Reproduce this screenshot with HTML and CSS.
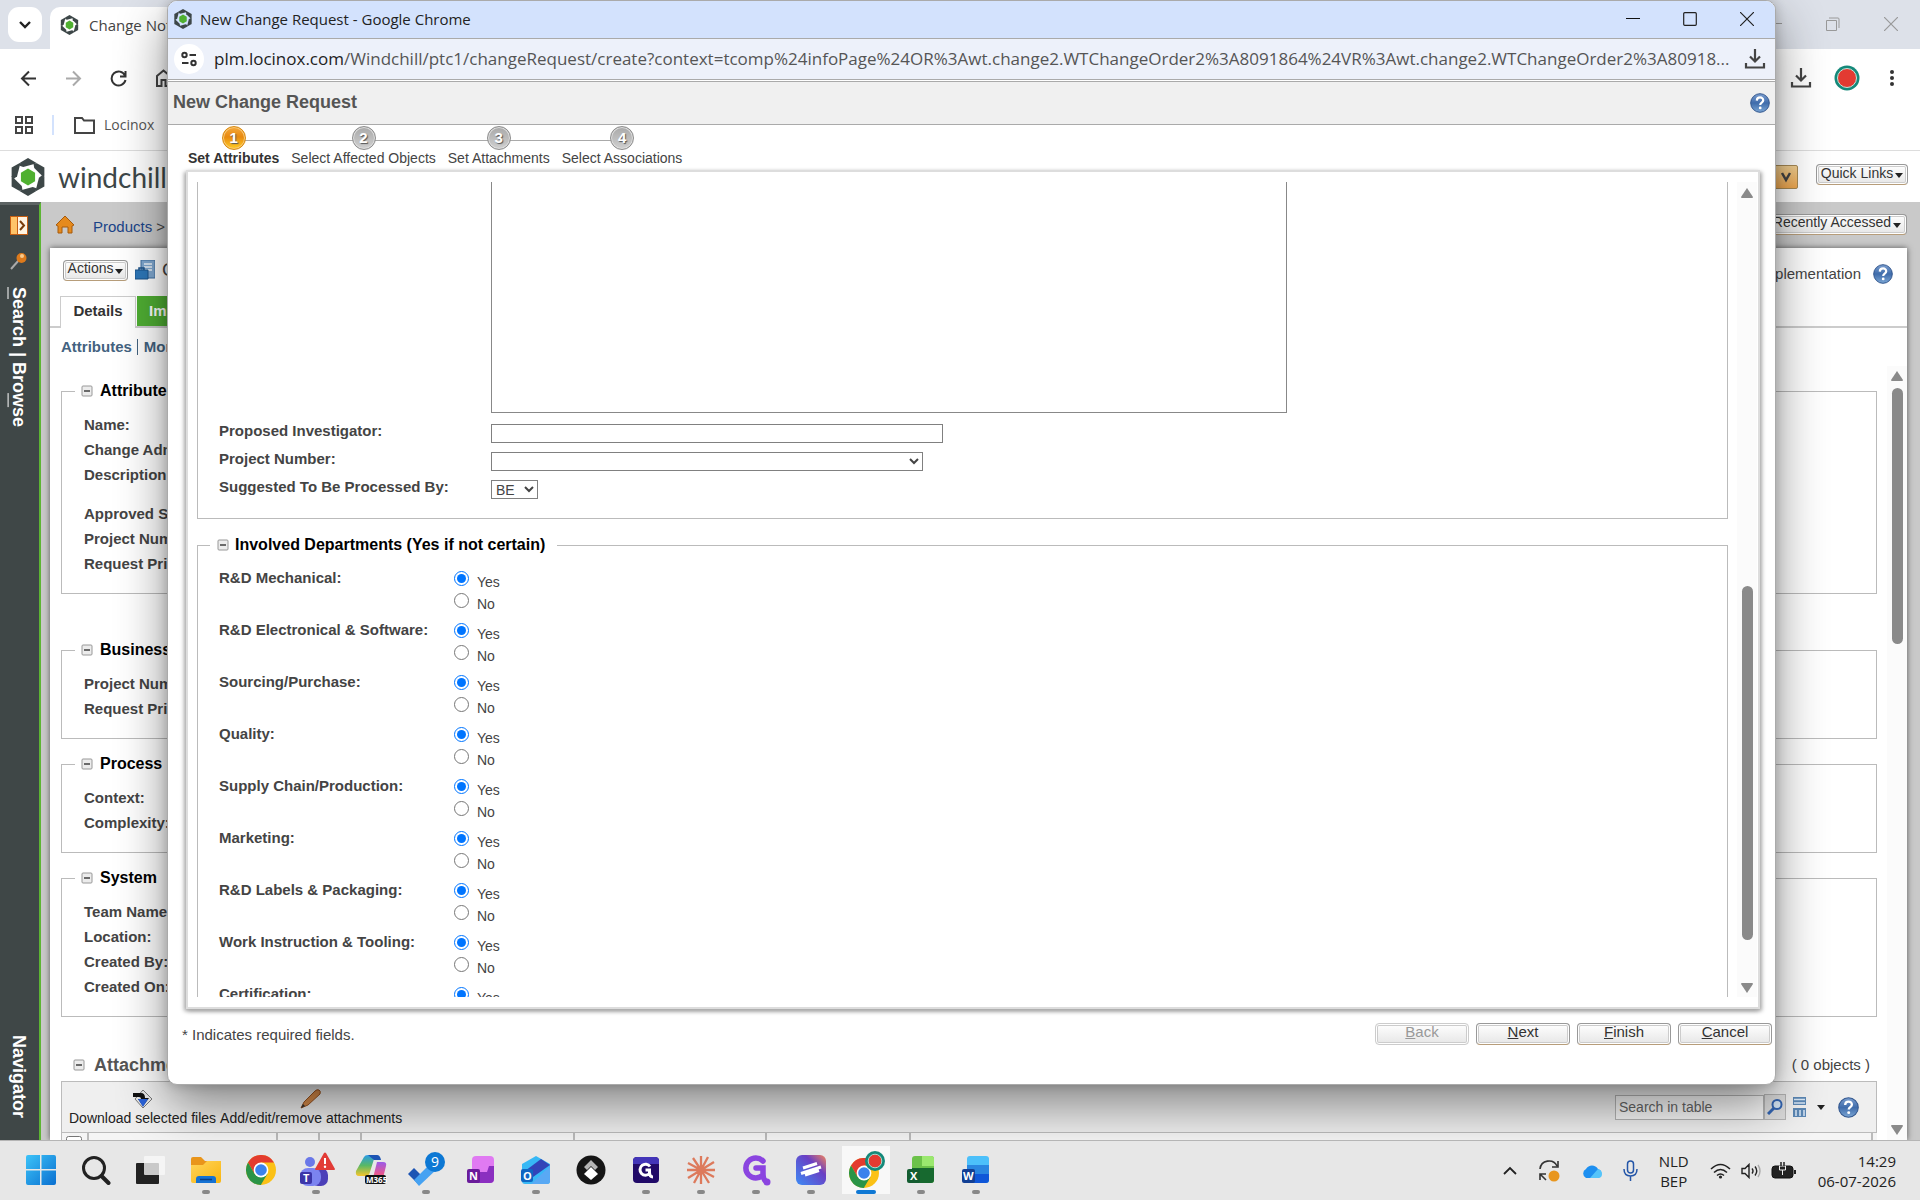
FILE: index.html
```html
<!DOCTYPE html>
<html lang="en">
<head>
<meta charset="utf-8">
<title>New Change Request</title>
<link rel="stylesheet" href="styles.css">
</head>
<body>
<svg class="defs" aria-hidden="true">
  <defs>
    <linearGradient id="gHelp" x1="0" y1="0" x2="0" y2="1"><stop offset="0" stop-color="#7c9fd0"/><stop offset=".5" stop-color="#3f6cab"/><stop offset="1" stop-color="#7ba6d4"/></linearGradient>
    <linearGradient id="gWin" x1="0" y1="0" x2="1" y2="1"><stop offset="0" stop-color="#3cc3f8"/><stop offset="1" stop-color="#0a6fd0"/></linearGradient>
    <linearGradient id="gFolder" x1="0" y1="0" x2="1" y2="1"><stop offset="0" stop-color="#ffd45c"/><stop offset="1" stop-color="#f9b50e"/></linearGradient>
    <linearGradient id="gM" x1="0" y1="0" x2="0" y2="1"><stop offset="0" stop-color="#2a9be8"/><stop offset=".5" stop-color="#59b865"/><stop offset="1" stop-color="#f7c52b"/></linearGradient>
    <linearGradient id="gM2" x1="0" y1="0" x2="0" y2="1"><stop offset="0" stop-color="#9b5be8"/><stop offset=".6" stop-color="#e8588f"/><stop offset="1" stop-color="#f5784e"/></linearGradient>
    <linearGradient id="gSt" x1="1" y1="0" x2="0" y2="1"><stop offset="0" stop-color="#f2845c"/><stop offset=".35" stop-color="#6a3fc4"/><stop offset="1" stop-color="#3d8bf5"/></linearGradient>
    <symbol id="minus" viewBox="0 0 12 12"><rect x="1" y="1" width="10" height="10" rx="1" fill="#ececec" stroke="#989898"/><path d="M3 6h6" stroke="#333" stroke-width="1.4"/></symbol>
    <symbol id="help" viewBox="0 0 20 20"><circle cx="10" cy="10" r="9.3" fill="url(#gHelp)" stroke="#34588f"/><path d="M6.8 7.6c.2-4.300 6.600-4 6.400-.2-.1 2.300-3 2.300-3 4.600" fill="none" stroke="#fff" stroke-width="2.200"/><circle cx="10.200" cy="14.900" r="1.400" fill="#fff"/></symbol>
    <path id="blade" d="M-8-15.400L0-20 9.500-14.500-5-10.500-9-12z" fill="#3d4748"/>
    <symbol id="ptc" viewBox="-18 -20 36 40"><use href="#blade"/><use href="#blade" transform="rotate(60)"/><use href="#blade" transform="rotate(120)"/><use href="#blade" transform="rotate(180)"/><use href="#blade" transform="rotate(240)"/><use href="#blade" transform="rotate(300)"/><path d="M0-9l7.500 4.500v9L0 9l-7.500-4.500v-9z" fill="#4fb030"/></symbol>
    <symbol id="chrome" viewBox="0 0 30 30"><circle cx="15" cy="15" r="15" fill="#fbc116"/><path d="M2 7.500A15 15 0 0 1 28 7.500H15L8.500 18.700z" fill="#e33b2e"/><path d="M2 7.500A15 15 0 0 0 14.800 30L21.500 18.700 8.500 18.700z" fill="#2a9447"/><circle cx="15" cy="15" r="7.400" fill="#fff"/><circle cx="15" cy="15" r="5.800" fill="#3b82ec"/></symbol>
    <symbol id="dl" viewBox="0 0 22 22"><path d="M11 1v12M6 8.500l5 5 5-5M2 15v4.500h18V15" fill="none" stroke="#444" stroke-width="2.200"/></symbol>
    <symbol id="up" viewBox="0 0 14 12"><path d="M7 1l6 9q0 1-1 1H2q-1 0-1-1z" fill="#8a8a8a"/></symbol>
    <symbol id="down" viewBox="0 0 14 12"><path d="M7 11l6-9q0-1-1-1H2q-1 0-1 1z" fill="#8a8a8a"/></symbol>
    <symbol id="caret" viewBox="0 0 8 5"><path d="M0 0h8L4 5z" fill="#222"/></symbol>
  </defs>
</svg>

<main class="browser">
  <div class="tabstrip">
    <button class="tab-search" aria-label="Search tabs"><svg width="14" height="10" viewBox="0 0 14 10"><path d="M2 2l5 5 5-5" fill="none" stroke="#222" stroke-width="2.400"/></svg></button>
    <div class="tab"><svg width="19" height="20"><use href="#ptc"/></svg><span>Change Notice</span></div>
    <div class="win-controls">
      <svg width="14" height="14" viewBox="0 0 14 14"><path d="M0 6.500h14" stroke="#999"/></svg>
      <svg width="14" height="14" viewBox="0 0 14 14"><path d="M.5 3.500h10v10H.5zM3 1h9q1 0 1 1v9" fill="none" stroke="#999"/></svg>
      <svg width="14" height="14" viewBox="0 0 14 14"><path d="M0 0l14 14M14 0L0 14" stroke="#999" stroke-width="1.200"/></svg>
    </div>
  </div>
  <div class="chrome-top">
    <div class="toolbar">
      <svg width="17" height="17" viewBox="0 0 17 17"><path d="M16 8.500H2M9 1.500l-7 7 7 7" fill="none" stroke="#333" stroke-width="2"/></svg>
      <svg width="17" height="17" viewBox="0 0 17 17"><path d="M1 8.500h14M8 1.500l7 7-7 7" fill="none" stroke="#aaa" stroke-width="2"/></svg>
      <svg width="17" height="17" viewBox="0 0 17 17"><path d="M15 5.500A7 7 0 1 0 15.500 10M15.500 1v5.500H10" fill="none" stroke="#333" stroke-width="2"/></svg>
      <svg width="17" height="18" viewBox="0 0 17 18"><path d="M2 17V7l6.500-5.500L15 7v10h-4.500v-6h-4v6z" fill="none" stroke="#444" stroke-width="2"/></svg>
      <div class="toolbar-right">
        <svg width="22" height="22"><use href="#dl"/></svg>
        <svg class="rec" width="26" height="26" viewBox="0 0 26 26"><circle cx="13" cy="13" r="12.500" fill="#14897a"/><circle cx="13" cy="13" r="9.500" fill="#e33a32" stroke="#bfe6dc"/></svg>
        <svg width="6" height="18" viewBox="0 0 6 18"><circle cx="3" cy="3" r="2" fill="#333"/><circle cx="3" cy="9" r="2" fill="#333"/><circle cx="3" cy="15" r="2" fill="#333"/></svg>
      </div>
    </div>
    <div class="bookmarks">
      <svg width="18" height="18" viewBox="0 0 18 18"><path d="M1 1h6v6H1zM11 1h6v6h-6zM1 11h6v6H1zM11 11h6v6h-6z" fill="none" stroke="#444" stroke-width="2"/></svg>
      <i></i>
      <svg width="21" height="18" viewBox="0 0 21 18"><path d="M1 16V2h7l2 2.500h10V17H1z" fill="none" stroke="#444" stroke-width="2"/></svg>
      <a href="#">Locinox</a>
    </div>
  </div>
  <header class="brand">
    <svg width="34" height="38"><use href="#ptc"/></svg>
    <span>windchill</span>
    <button class="gold" aria-label="Search options"><svg width="12" height="12" viewBox="0 0 12 12"><path d="M2 2l4 7 4-7" fill="none" stroke="#444" stroke-width="2.500"/></svg></button>
    <button class="btn quick">Quick Links<svg width="8" height="5"><use href="#caret"/></svg></button>
  </header>
  <div class="app">
    <nav class="navigator">
      <svg width="18" height="19" viewBox="0 0 18 19"><path d="M0 0h18v19H0z" fill="#c65e12"/><path d="M1 1h6v17H1z" fill="#ffc469"/><path d="M8 1h9v17H8z" fill="#fff4e2"/><path d="M10 5l4 4.500-4 4.500" fill="none" stroke="#7a3c0a" stroke-width="2"/></svg>
      <svg width="18" height="18" viewBox="0 0 18 18"><path d="M1 17l8-9" stroke="#aaa" stroke-width="2"/><circle cx="11.500" cy="6" r="5" fill="#dd7a1c"/><circle cx="12" cy="4" r="2" fill="#f9c98c"/></svg>
      <span><u>S</u>earch | Bro<u>w</u>se</span>
      <span class="nav-end">Navigator</span>
    </nav>
    <div class="workspace">
      <div class="crumbs">
        <svg width="18" height="18" viewBox="0 0 18 18"><path d="M0 9l9-9 9 9-2 1v7h-4v-6H6v6H2v-7z" fill="#e58a1d" stroke="#a65a0c"/></svg>
        <span><a href="#">Products</a> &gt;</span>
        <button class="btn recent">Recently Accessed<svg width="8" height="5"><use href="#caret"/></svg></button>
      </div>
      <section class="page">
        <div class="page-head">
          <div class="page-actions">
            <button class="btn">Actions<svg width="8" height="5"><use href="#caret"/></svg></button>
            <svg width="20" height="20" viewBox="0 0 20 20"><path d="M6 0h14v18H6z" fill="#7fa7cf" stroke="#3f6f9f"/><path d="M9 4h8M9 7h8M9 10h8" stroke="#eef5fb" stroke-width="1.500"/><path d="M0 10h13v9H0z" fill="#2d77b8" stroke="#1b5288"/><path d="M4 10V8h5v2" fill="none" stroke="#1b5288" stroke-width="1.500"/></svg>
            <span class="page-title">C</span>
          </div>
          <span class="state">Implementation</span>
          <svg width="20" height="20"><use href="#help"/></svg>
        </div>
        <div class="tabs"><button class="on">Details</button><button>Implementation</button></div>
        <div class="sublinks"><a href="#">Attributes</a><a href="#">More</a></div>
        <div class="scroll">
          <div class="scroll-body">
            <fieldset class="group"><legend><svg width="12" height="12"><use href="#minus"/></svg>Attributes</legend>
              <p>Name:</p><p>Change Admin</p><p>Description:</p><p class="gap">Approved S</p><p>Project Number</p><p>Request Priority</p></fieldset>
            <fieldset class="group wide"><legend><svg width="12" height="12"><use href="#minus"/></svg>Business</legend>
              <p>Project Number</p><p>Request Priority</p></fieldset>
            <fieldset class="group"><legend><svg width="12" height="12"><use href="#minus"/></svg>Process</legend>
              <p>Context:</p><p>Complexity:</p></fieldset>
            <fieldset class="group"><legend><svg width="12" height="12"><use href="#minus"/></svg>System</legend>
              <p>Team Name</p><p>Location:</p><p>Created By:</p><p>Created On:</p></fieldset>
            <div class="attach-head"><svg width="12" height="12"><use href="#minus"/></svg><h2>Attachments</h2><span>( 0 objects )</span></div>
            <div class="attach-bar">
              <button class="tool"><svg width="22" height="20" viewBox="0 0 22 20"><path d="M11 1l9 9-9 9-8-9z" fill="#e8e8e8" stroke="#777"/><path d="M1 4h8q4 0 4 5h4l-6 8-5-7h3q0-2-2-2H1z" fill="#111"/><path d="M6 10h10l-5 8z" fill="#2a62d8"/></svg>Download selected files</button>
              <button class="tool"><svg width="22" height="20" viewBox="0 0 22 20"><path d="M1 19l3-6L15 2q2-2 4-1t1 4L8 16z" fill="#d98c4a" stroke="#9c5420"/><path d="M1 19l2-4 2 2z" fill="#333"/></svg>Add/edit/remove attachments</button>
              <div class="find">
                <input type="text" placeholder="Search in table" aria-label="Search in table"><button aria-label="Search"><svg width="16" height="16" viewBox="0 0 16 16"><path d="M1 15l6-6" stroke="#3466b4" stroke-width="3"/><circle cx="10" cy="5.500" r="4.500" fill="#d8e8f8" stroke="#3466b4" stroke-width="2"/></svg></button>
                <svg width="13" height="20" viewBox="0 0 13 20"><path d="M0 0h13v8H0zM0 11h13v9H0z" fill="#5b87b4"/><path d="M1 2.500h11M1 6h11M3 13v6M7 13v6M11 13v6" stroke="#dbe9f6" stroke-width="1.500"/></svg>
                <svg class="mini" width="8" height="5"><use href="#caret"/></svg>
                <svg width="21" height="21"><use href="#help"/></svg>
              </div>
            </div>
            <div class="attach-cols"><i class="w27"><input type="checkbox" aria-label="Select all"></i><i class="w188"></i><i class="w42"></i><i class="w42"></i><i class="w212"></i><i class="w192"></i><i class="w144"></i><i class="rest"></i></div>
          </div>
          <div class="bar outer"><svg width="14" height="12"><use href="#up"/></svg><b></b><svg width="14" height="12"><use href="#down"/></svg></div>
        </div>
      </section>
    </div>
  </div>
</main>

<section class="dialog" aria-label="New Change Request">
  <div class="d-title"><svg width="18" height="20"><use href="#ptc"/></svg><span>New Change Request - Google Chrome</span>
    <div class="d-controls">
      <svg width="14" height="14" viewBox="0 0 14 14"><path d="M0 6.500h14" stroke="#111"/></svg>
      <svg width="14" height="14" viewBox="0 0 14 14"><rect x=".7" y=".7" width="12.600" height="12.600" rx="1" fill="none" stroke="#222" stroke-width="1.200"/></svg>
      <svg width="14" height="14" viewBox="0 0 14 14"><path d="M0 0l14 14M14 0L0 14" stroke="#222" stroke-width="1.200"/></svg>
    </div></div>
  <div class="d-url"><span class="site"><svg width="16" height="16" viewBox="0 0 16 16"><g fill="none" stroke="#333" stroke-width="2"><circle cx="3.500" cy="4" r="2.200"/><path d="M8.500 4H15M1 12h6.500"/><circle cx="12.500" cy="12" r="2.200"/></g></svg></span>
    <p>plm.locinox.com<span>/Windchill/ptc1/changeRequest/create?context=tcomp%24infoPage%24OR%3Awt.change2.WTChangeOrder2%3A8091864%24VR%3Awt.change2.WTChangeOrder2%3A80918...</span></p>
    <svg width="22" height="22"><use href="#dl"/></svg></div>
  <div class="d-head"><h1>New Change Request</h1><svg width="20" height="20"><use href="#help"/></svg></div>
  <ol class="steps">
    <li class="now"><i>1</i>Set Attributes</li><li><i>2</i>Select Affected Objects</li><li><i>3</i>Set Attachments</li><li><i>4</i>Select Associations</li>
  </ol>
  <form class="d-panel">
    <div class="d-body">
      <div class="box first">
        <textarea aria-label="Description"></textarea>
        <label for="inv">Proposed Investigator:</label><input id="inv" type="text">
        <label for="prj">Project Number:</label><select id="prj"><option></option></select>
        <label for="by">Suggested To Be Processed By:</label><select id="by"><option>BE</option></select>
      </div>
      <fieldset class="box second">
        <legend><svg width="12" height="12"><use href="#minus"/></svg>Involved Departments (Yes if not certain)</legend>
        <div class="dept"><span>R&amp;D Mechanical:</span><div><label><input type="radio" name="d1" checked><em>Yes</em></label><label><input type="radio" name="d1"><em>No</em></label></div></div>
        <div class="dept"><span>R&amp;D Electronical &amp; Software:</span><div><label><input type="radio" name="d2" checked><em>Yes</em></label><label><input type="radio" name="d2"><em>No</em></label></div></div>
        <div class="dept"><span>Sourcing/Purchase:</span><div><label><input type="radio" name="d3" checked><em>Yes</em></label><label><input type="radio" name="d3"><em>No</em></label></div></div>
        <div class="dept"><span>Quality:</span><div><label><input type="radio" name="d4" checked><em>Yes</em></label><label><input type="radio" name="d4"><em>No</em></label></div></div>
        <div class="dept"><span>Supply Chain/Production:</span><div><label><input type="radio" name="d5" checked><em>Yes</em></label><label><input type="radio" name="d5"><em>No</em></label></div></div>
        <div class="dept"><span>Marketing:</span><div><label><input type="radio" name="d6" checked><em>Yes</em></label><label><input type="radio" name="d6"><em>No</em></label></div></div>
        <div class="dept"><span>R&amp;D Labels &amp; Packaging:</span><div><label><input type="radio" name="d7" checked><em>Yes</em></label><label><input type="radio" name="d7"><em>No</em></label></div></div>
        <div class="dept"><span>Work Instruction &amp; Tooling:</span><div><label><input type="radio" name="d8" checked><em>Yes</em></label><label><input type="radio" name="d8"><em>No</em></label></div></div>
        <div class="dept"><span>Certification:</span><div><label><input type="radio" name="d9" checked><em>Yes</em></label></div></div>
      </fieldset>
    </div>
    <div class="bar inner"><svg width="14" height="12"><use href="#up"/></svg><b></b><svg width="14" height="12"><use href="#down"/></svg></div>
  </form>
  <footer class="d-foot"><p>* Indicates required fields.</p>
    <button class="btn big" disabled><u>B</u>ack</button><button class="btn big"><u>N</u>ext</button><button class="btn big"><u>F</u>inish</button><button class="btn big"><u>C</u>ancel</button></footer>
</section>

<footer class="taskbar">
  <div class="apps">
    <div class="t"><svg width="30" height="30" viewBox="0 0 30 30"><path d="M0 2q0-2 2-2h12v14H0zM15.500 0H28q2 0 2 2v12H15.500zM0 15.500h14V30H2q-2 0-2-2zM15.500 15.500H30V28q0 2-2 2H15.500z" fill="url(#gWin)"/></svg></div>
    <div class="t"><svg width="30" height="30" viewBox="0 0 30 30"><circle cx="13" cy="13" r="10.500" fill="none" stroke="#222" stroke-width="3"/><path d="M20.500 21l7 7" stroke="#222" stroke-width="4" stroke-linecap="round"/></svg></div>
    <div class="t"><svg width="30" height="30" viewBox="0 0 30 30"><rect x="0" y="8" width="23" height="21" rx="1" fill="#222"/><rect x="8" y="1" width="21" height="19" rx="1" fill="#f8f8f8" fill-opacity=".78"/></svg></div>
    <div class="t run"><svg width="30" height="30" viewBox="0 0 30 30"><path d="M0 4q0-2 2-2h8l4 4h16v10H0z" fill="#e9951b"/><path d="M0 10h12l4-4h14v20q0 2-2 2H2q-2 0-2-2z" fill="url(#gFolder)"/><path d="M5 28v-4q0-3 3-3h14q3 0 3 3v4z" fill="#1572d3"/><path d="M9 24.500h12" stroke="#0c3f85" stroke-width="1.500"/></svg></div>
    <div class="t"><svg width="30" height="30"><use href="#chrome"/></svg></div>
    <div class="t run"><svg width="38" height="36" viewBox="0 0 38 36"><circle cx="13" cy="10" r="5" fill="#6a78e8"/><rect x="14" y="16" width="17" height="18" rx="7" fill="#4b3fb8"/><rect x="3" y="16" width="21" height="18" rx="8" fill="#7b83f0"/><rect x="3" y="20" width="12" height="12" rx="2" fill="#3b35a8"/><text x="6" y="30" class="g10">T</text><path d="M27 1q1-1 2 0l9 16q0 1-1 1H19q-1 0-1-1z" fill="#e23b36"/><path d="M28 6v6" stroke="#fff" stroke-width="2"/><circle cx="28" cy="14.800" r="1.200" fill="#fff"/></svg></div>
    <div class="t"><svg width="32" height="32" viewBox="0 0 32 32"><path d="M9 3q1-2 4-2h9q-2 1-3 4l-4 13q-1 4-4 4H4q-4 0-3-5z" fill="url(#gM)"/><path d="M13 1h9q3 0 4 5h-7z" fill="#1c54b4"/><path d="M22 8h6q4 0 3 4l-3 12q-1 4-4 4h-9q2-1 3-4z" fill="url(#gM2)"/><rect x="10" y="21" width="21" height="9" rx="2" fill="#111"/><text x="11" y="29" class="g8">M365</text></svg></div>
    <div class="t run"><svg width="38" height="38" viewBox="0 0 38 38"><path d="M1 23l6-6 6 6-1 11z" fill="#1c54b4"/><path d="M7 29L24 12l6 6-18 17z" fill="#46a2f2"/><circle cx="28" cy="11" r="10" fill="#0d78d4"/><text x="24" y="16" class="g14">9</text></svg></div>
    <div class="t"><svg width="28" height="30" viewBox="0 0 28 30"><rect x="5" y="1" width="22" height="27" rx="4" fill="#e07af2"/><path d="M5 17h15l2-6h5v13q0 4-4 4H5z" fill="#8b2fc0"/><rect x="0" y="14" width="13" height="14" rx="2" fill="#6a1b9a"/><text x="2" y="25" class="g10">N</text></svg></div>
    <div class="t run"><svg width="30" height="30" viewBox="0 0 30 30"><path d="M1 9L15 1l14 8v17q0 3-3 3H4q-3 0-3-3z" fill="#37b8f5"/><path d="M4 16L20 4l9 6-17 12z" fill="#3243b8"/><path d="M29 11v15q0 3-3 3H10z" fill="#59a9f4"/><rect x="0" y="14" width="12" height="13" rx="2" fill="#0f66c2"/><text x="2" y="25" class="g10">O</text></svg></div>
    <div class="t"><svg width="30" height="30" viewBox="0 0 30 30"><circle cx="15" cy="15" r="14.500" fill="#161616"/><path d="M15 5l7 7-3 3-4-4-4 4-3-3z" fill="#b5b5b5"/><path d="M15 12l7 7-7 6-7-6z" fill="#fff"/></svg></div>
    <div class="t run"><svg width="26" height="26" viewBox="0 0 26 26"><rect width="26" height="26" rx="4" fill="#210a68"/><path d="M0 7V4q0-4 4-4h18q4 0 4 4v3z" fill="#4335b8"/><path d="M17 9.500A5.500 5.500 0 1 0 16.500 16.500V13h-4M16.500 15q0 5 3.500 5" fill="none" stroke="#fff" stroke-width="3"/></svg></div>
    <div class="t run"><svg width="30" height="30" viewBox="0 0 30 30"><path d="M15 15V1M15 15l7-13M15 15L28 7M15 15h14M15 15l13 7M15 15l8 13M15 15v14M15 15L8 28M15 15L2 23M15 15H1M15 15L2 8M15 15L7 3" stroke="#dd7a5c" stroke-width="2.300"/></svg></div>
    <div class="t run"><svg width="30" height="32" viewBox="0 0 30 32"><path d="M22 7A10 10 0 1 0 22 21V14h-7M22 18q0 8 3 9" fill="none" stroke="#8b45e0" stroke-width="5.500" stroke-linecap="round"/><circle cx="26" cy="28" r="3.500" fill="#8b45e0"/></svg></div>
    <div class="t run"><svg width="30" height="30" viewBox="0 0 30 30"><rect width="30" height="30" rx="6" fill="url(#gSt)"/><path d="M7 14l14-4.500M5 19.500l20-6.500M9 21l14-4.500" transform="translate(0 -1)" fill="none" stroke="#fff" stroke-width="3"/></svg></div>
    <div class="t run active"><svg width="38" height="38" viewBox="0 0 38 38"><use href="#chrome" x="2" y="7" width="30" height="30"/><circle cx="28" cy="10" r="10" fill="#14897a"/><circle cx="28" cy="10" r="6.800" fill="#e33a32" stroke="#a9ddd0"/></svg></div>
    <div class="t run"><svg width="28" height="30" viewBox="0 0 28 30"><rect x="5" y="1" width="22" height="27" rx="3" fill="#6cc24a"/><path d="M5 13h22v12q0 3-3 3H5z" fill="#17692f"/><path d="M15 1h9q3 0 3 3v7H15z" fill="#9be86f"/><rect x="0" y="14" width="13" height="14" rx="2" fill="#135c30"/><text x="3" y="25" class="g10">X</text></svg></div>
    <div class="t run"><svg width="28" height="30" viewBox="0 0 28 30"><rect x="5" y="1" width="22" height="27" rx="3" fill="#4cc0fa"/><path d="M5 10h22v9H5z" fill="#2a86e0"/><path d="M5 19h22v6q0 3-3 3H5z" fill="#0f56d8"/><rect x="0" y="14" width="13" height="14" rx="2" fill="#123f94"/><text x="1" y="25" class="g10">W</text></svg></div>
  </div>
  <div class="tray">
    <svg width="14" height="9" viewBox="0 0 14 9"><path d="M1 8l6-6 6 6" fill="none" stroke="#222" stroke-width="1.800"/></svg>
    <svg width="22" height="22" viewBox="0 0 22 22"><path d="M2 9A9 9 0 0 1 19 6M20 1v6h-6M8 20l-6-6M2 20v-6h6" fill="none" stroke="#333" stroke-width="1.600"/><circle cx="16" cy="16" r="5.500" fill="#e8961e"/></svg>
    <svg width="21" height="15" viewBox="0 0 21 15"><path d="M5 15a5 5 0 0 1 0-9 7 7 0 0 1 12 0 4.600 4.600 0 0 1-1 9z" fill="#1d8ff0"/><path d="M9 15L17 6q4 1 4 5t-4 4z" fill="#54c4fa"/></svg>
    <svg width="15" height="21" viewBox="0 0 15 21"><rect x="4.500" y="1" width="6" height="12" rx="3" fill="none" stroke="#2456a8" stroke-width="1.500"/><path d="M1 9q0 7 6.500 7T14 9M7.500 16v5" fill="none" stroke="#2456a8" stroke-width="1.500"/></svg>
    <p class="lang">NLD<br>BEP</p>
    <div class="status">
      <svg width="21" height="16" viewBox="0 0 21 16"><g fill="none" stroke="#222" stroke-width="1.600"><path d="M1 6q9.500-9 19 0M4 9.500q6.500-6 13 0M7 12.500q3.500-3 7 0"/></g><circle cx="10.500" cy="14" r="1.600" fill="#222"/></svg>
      <svg width="20" height="16" viewBox="0 0 20 16"><g fill="none" stroke="#222" stroke-width="1.400"><path d="M1 5.500h3l4-4v13l-4-4H1zM11 5.500q2 2.500 0 5M14 3.500q3.500 4.500 0 9"/><path d="M17 2q4 6 0 12" stroke="#aaa"/></g></svg>
      <svg width="26" height="18" viewBox="0 0 26 18"><rect x="1" y="4" width="21" height="12" rx="3" fill="#222" stroke="#111"/><path d="M23 8h2v4h-2" fill="#222"/><path d="M8.500 4h6v4h-6zM11.500 8v5" fill="#222" stroke="#eee"/><path d="M10 0v4M13 0v4" stroke="#222" stroke-width="1.500"/></svg>
    </div>
    <p class="clock">14:29<br>06-07-2026</p>
  </div>
</footer>
</body>
</html>
```
FILE: styles.css
```css
* { box-sizing: border-box; }
body {
  margin: 0;
  height: 100vh;
  display: flex;
  flex-direction: column;
  position: relative;
  overflow: hidden;
  font: 14px/20px "Liberation Sans", Arial, sans-serif;
  color: #444;
}
p, h1, h2, ol { margin: 0; padding: 0; }
svg { display: block; flex: none; }
.defs { position: absolute; width: 0; height: 0; }
button { font: inherit; color: inherit; margin: 0; cursor: pointer; }
a { text-decoration: none; }

/* Browser window behind the dialog */
.browser { flex: 1; min-height: 0; display: flex; flex-direction: column; background: #fff; }
.tabstrip { height: 49px; background: #dde1e9; display: flex; padding: 7px 22px 0 8px; gap: 8px; }
.tab-search { width: 34px; height: 35px; border: 0; border-radius: 11px; background: #fff; display: grid; place-items: center; padding: 0; }
.tab { width: 260px; height: 42px; background: #fff; border-radius: 10px 10px 0 0; display: flex; align-items: flex-start; gap: 10px; padding: 8px 10px; font: 15px/20px "Open Sans", sans-serif; white-space: nowrap; }
.win-controls { margin-left: auto; display: flex; gap: 44px; padding-top: 10px; }
.chrome-top { height: 102px; border-bottom: 1px solid #ddd; background: #fff; }
.toolbar { height: 58px; display: flex; align-items: center; gap: 28px; padding: 0 25px 0 20px; }
.toolbar-right { margin-left: auto; display: flex; align-items: center; gap: 22px; }
.rec { margin-right: 7px; }
.bookmarks { height: 36px; display: flex; align-items: center; padding-left: 15px; }
.bookmarks i { width: 2px; height: 20px; background: #d3e2fd; margin: 0 20px 0 19px; }
.bookmarks a { margin-left: 9px; color: #555; font: 14px/20px "Open Sans", sans-serif; }

.brand { height: 51px; display: flex; align-items: center; padding: 0 12px 0 11px; }
.brand span { margin-left: 13px; font: 28px/34px Lato, sans-serif; color: #3d4748; }
.btn {
  height: 21px; padding: 0 4px 4px; border: 1px solid #999; border-bottom-color: #b79d7a; border-radius: 4px;
  background: linear-gradient(#fff, #e6e6e6); box-shadow: inset 0 0 0 1px #fff, inset 0 0 0 2px #ccc;
  line-height: 16px; display: flex; align-items: center; justify-content: center; gap: 2px; white-space: nowrap; color: #333;
}
.btn svg { margin-top: 6px; }
.gold { margin-left: auto; width: 24px; height: 24px; padding: 0; display: grid; place-items: center; border: 1px solid #a98b55; border-radius: 2px; background: linear-gradient(#f3d193, #f2a950); }
.quick { margin: 0 0 4px 18px; width: 92px; }

.app { flex: 1; min-height: 0; display: flex; }
.navigator {
  width: 41px; background: #3f4747; border-right: 2px solid #5cb533; border-top: 3px solid #5c6363; color: #fff; font-weight: bold; font-size: 18px;
  display: flex; flex-direction: column; align-items: center; padding: 11px 2px 22px 0; gap: 17px;
}
.navigator span { writing-mode: vertical-rl; line-height: 20px; white-space: nowrap; }
.nav-end { margin-top: auto; }
.workspace { flex: 1; min-width: 0; display: flex; flex-direction: column; background: #c9c9c9; padding: 0 13px 0 9px; }
.crumbs { height: 46px; flex: none; display: flex; align-items: center; padding-left: 6px; font-size: 15px; }
.crumbs span { margin: 4px 0 0 19px; }
.crumbs a { color: #1a4488; }
.recent { margin: 0 0 2px auto; width: 140px; font-size: 14px; }
.page { flex: 1; min-height: 0; background: #fff; box-shadow: 0 0 6px #555; display: flex; flex-direction: column; }
.page-head { height: 48px; display: flex; align-items: center; padding: 4px 14px 0 13px; gap: 8px; font-size: 15px; }
.page-actions { display: flex; align-items: center; gap: 7px; margin-bottom: 8px; }
.page-head .btn { width: 65px; font-size: 14px; }
.page-title { font-size: 19px; }
.state { margin-left: auto; margin-right: 4px; }
.tabs { height: 32px; flex: none; display: flex; align-items: flex-start; gap: 1px; padding-left: 10px; border-bottom: 2px solid #ccc; }
.tabs button { border: 0; height: 30px; padding: 0 12px; font-weight: bold; font-size: 15px; background: #4fae33; color: #fff; }
.tabs .on { height: 32px; width: 76px; padding-bottom: 4px; background: #fff; color: #333; border: 1px solid #ccc; border-bottom: 0; }
.sublinks { height: 38px; flex: none; display: flex; align-items: center; padding-left: 11px; font-weight: bold; font-size: 15px; }
.sublinks a { color: #43627f; line-height: 16px; }
.sublinks a + a { margin-left: 5px; padding-left: 6px; border-left: 1px solid #43627f; }
.scroll { flex: 1; min-height: 0; display: flex; }
.scroll-body { flex: 1; min-width: 0; overflow: hidden; display: flex; flex-direction: column; padding: 15px 10px 0 11px; }
.group { border: 1px solid #bbb; margin: 0 0 15px; padding: 11px 22px 17px; min-width: 0; }
.group.wide { margin-top: 31px; }
.group legend { margin-left: -9px; padding: 0 10px 0 6px; height: 20px; display: flex; align-items: center; gap: 7px; font-weight: bold; font-size: 16px; color: #000; }
.group p { line-height: 25px; font-weight: bold; font-size: 15px; }
.group .gap { margin-top: 14px; }
.attach-head { display: flex; align-items: center; gap: 9px; margin-top: 22px; height: 21px; padding: 0 7px 0 12px; font-size: 15px; }
.attach-head h2 { font-size: 18px; color: #555; }
.attach-head span { margin-left: auto; }
.attach-bar { margin-top: 6px; height: 52px; flex: none; border: 1px solid #bbb; background: #efefef; display: flex; align-items: flex-start; gap: 4px; padding: 7px 17px 0 7px; color: #222; }
.tool { border: 0; background: none; padding: 0; display: flex; flex-direction: column; align-items: center; white-space: nowrap; line-height: 18px; }
.find { margin: 5px 0 0 auto; display: flex; align-items: center; }
.find input { width: 149px; height: 25px; border: 1px solid #b5b5b5; background: #f8f8f8; font: inherit; padding: 0 3px; }
.find input::placeholder { color: #666; opacity: 1; }
.find button { width: 22px; height: 26px; margin: 0 7px 0 0; padding: 0; border: 1px solid #b5b5b5; background: #ddd; display: grid; place-items: center; }
.mini { margin: 0 13px 0 11px; }
.attach-cols { flex: 1; display: flex; overflow: hidden; border-left: 1px solid #bbb; background: #f5f5f5; }
.attach-cols i { flex: none; border-right: 2px solid #bbb; height: 8px; overflow: hidden; }
.attach-cols input { margin: 3px 4px; width: 16px; height: 16px; display: block; }
.w27 { width: 27px; } .w188 { width: 189px; } .w42 { width: 42px; } .w212 { width: 213px; } .w192 { width: 192px; } .w144 { width: 144px; }
.attach-cols .rest { flex: 1; margin-right: 4px; }

.bar { display: flex; flex-direction: column; align-items: center; background: #fbfbfb; width: 20px; flex: none; }
.bar b { width: 11px; border-radius: 6px; background: #8a8a8a; }
.outer { padding: 4px 0; }
.outer b { height: 256px; margin: 6px 0 auto; }
.inner { padding: 5px 0 3px; }
.inner b { height: 354px; margin: auto 0 42px; }

/* Dialog window */
.dialog {
  position: absolute; left: 167px; right: 144px; top: 0; bottom: 115px; background: #fff;
  border: 1px solid #aaa; border-radius: 10px; overflow: hidden; display: flex; flex-direction: column;
  box-shadow: 0 20px 50px rgba(0, 0, 0, .45), 0 0 12px rgba(0, 0, 0, .2);
}
.d-title { height: 38px; flex: none; background: #d3e2fd; border-bottom: 1px solid #aaa; display: flex; align-items: center; gap: 8px; padding: 0 21px 2px 6px; font: 15px/20px "Open Sans", sans-serif; color: #222; }
.d-controls { margin-left: auto; display: flex; gap: 43px; }
.d-url { height: 41px; flex: none; background: #edf1fa; border-bottom: 1px solid #aaa; display: flex; align-items: center; padding: 0 9px 0 6px; font: 17px/24px "Open Sans", sans-serif; color: #222; }
.d-url p { margin-left: 10px; flex: 1; min-width: 0; white-space: nowrap; overflow: hidden; }
.d-url p span { color: #555; }
.site { width: 30px; height: 30px; border-radius: 15px; background: #fff; display: grid; place-items: center; }
.d-head { height: 44px; flex: none; background: #f0f0f0; border-top: 1px solid #aaa; border-bottom: 1px solid #aaa; display: flex; align-items: center; justify-content: space-between; padding: 0 5px; margin-top: 1px; }
.d-head h1 { font-size: 18px; line-height: 22px; padding-bottom: 2px; color: #555; }
.steps { height: 45px; flex: none; list-style: none; display: flex; padding: 1px 0 0 14px; }
.steps li { position: relative; padding: 0 6px; display: flex; flex-direction: column; align-items: center; line-height: 16px; white-space: nowrap; }
.steps li::before { content: ""; position: absolute; left: 0; right: 0; top: 14px; border-top: 1px solid #aaa; }
.steps li:first-child::before { left: 50%; }
.steps li:last-child::before { right: 50%; }
.steps i { position: relative; width: 24px; height: 24px; border-radius: 12px; border: 1px solid #8d8d8d; box-shadow: inset 0 0 0 1px #ddd; background: linear-gradient(#a9a9a9, #cfcfcf); color: #fff; font: bold 15px/22px "Liberation Sans", sans-serif; text-align: center; text-shadow: 1px 1px 1px #555; }
.steps .now { font-weight: bold; color: #333; }
.steps .now i { border-color: #d98a10; box-shadow: inset 0 0 0 1px #f8c878; background: linear-gradient(#f5a83a, #e8890f 45%, #ffcf25); }

.d-panel { flex: 1; min-height: 0; margin: 0 15px 0 18px; border: 2px solid #ddd; box-shadow: -2px 2px 4px #aaa, 2px 2px 4px #aaa; padding: 10px 1px 10px 9px; display: flex; }
.d-body { flex: 1; min-width: 0; overflow: hidden; margin-right: 9px; }
.box { border: 1px solid #bbb; margin: 0; padding: 0 21px; }
.first { height: 337px; border-top: 0; display: grid; grid-template-columns: 272px 1fr; grid-template-rows: 231px 19px 19px 19px; row-gap: 9px; align-items: start; font-size: 15px; }
.first label { font-weight: bold; line-height: 18px; color: #444; }
.first textarea { grid-column: 2; width: 796px; max-width: 100%; height: 231px; margin: 0; border: 1px solid #888; border-top: 0; resize: none; }
.first input, .first select { height: 19px; border: 1px solid #808080; background: #fff; margin: 2px 0 0; padding: 0; font: 14px "Liberation Sans", sans-serif; color: #444; }
.first input { width: 452px; }
.first #prj { width: 432px; }
.first #by { width: 47px; }
.second { margin-top: 16px; padding-top: 13px; min-width: 0; }
.second legend { margin-left: -9px; padding: 0 12px 0 7px; height: 20px; display: flex; align-items: center; gap: 6px; font-weight: bold; font-size: 16px; color: #000; }
.dept { height: 52px; display: grid; grid-template-columns: 235px 1fr; }
.dept > span { font-weight: bold; font-size: 15px; }
.dept label { display: flex; align-items: flex-start; height: 22px; }
.dept input { width: 15px; height: 15px; margin: 3px 8px 0 0; accent-color: #0075ff; }
.dept em { font-style: normal; line-height: 18px; padding-top: 5px; }
.d-foot { flex: none; height: 75px; display: flex; align-items: flex-start; gap: 7px; padding: 14px 3px 0 14px; }
.d-foot p { margin-right: auto; font-size: 15px; line-height: 24px; }
.big { width: 94px; height: 22px; font-size: 15px; }
.big u { margin-right: -2px; }
.big:disabled { color: #999; border-color: #ccc; }

/* Taskbar */
.taskbar { height: 60px; flex: none; position: relative; background: #e7e7e7; border-top: 1px solid #b5b5b5; display: flex; justify-content: space-between; padding: 0 24px 0 13px; }
.apps { display: flex; }
.t { width: 55px; height: 58px; display: grid; place-items: center; position: relative; }
.run::after { content: ""; position: absolute; bottom: 5px; left: 24px; width: 8px; height: 4px; border-radius: 2px; background: #888; }
.active { background: linear-gradient(#f8f8f8, #f8f8f8) center / 48px 48px no-repeat; }
.active::after { width: 20px; left: 18px; background: #0f78d4; }
.g8, .g10, .g14 { fill: #fff; font: bold 8px "Open Sans", sans-serif; }
.g10 { font-size: 11px; }
.g14 { font: 14px "Open Sans", sans-serif; }
.tray { display: flex; align-items: center; gap: 21px; font: 15px/20px "Open Sans", sans-serif; color: #222; }
.status { display: flex; align-items: center; gap: 10px; }
.lang { text-align: center; }
.clock { text-align: right; }
```
